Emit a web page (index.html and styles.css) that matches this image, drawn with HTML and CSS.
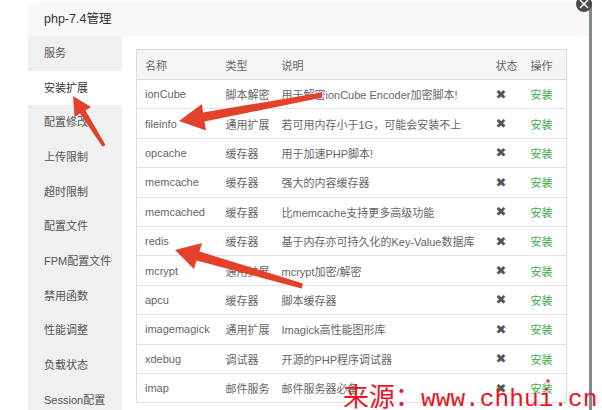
FILE: index.html
```html
<!DOCTYPE html>
<html lang="zh-CN">
<head>
    <meta charset="UTF-8">
    <title>php-7.4管理</title>
    <link rel="stylesheet" href="styles.css">
</head>
<body>
    <div class="dialog">
        <div class="title">php-7.4管理</div>
        <div class="layer-body">
            <ul class="side">
                <li>服务</li>
                <li class="active">安装扩展</li>
                <li>配置修改</li>
                <li>上传限制</li>
                <li>超时限制</li>
                <li>配置文件</li>
                <li>FPM配置文件</li>
                <li>禁用函数</li>
                <li>性能调整</li>
                <li>负载状态</li>
                <li>Session配置</li>
            </ul>
            <div class="main">
                <table class="ext-table">
                    <colgroup>
                        <col class="c-name"><col class="c-type"><col><col class="c-state"><col class="c-op">
                    </colgroup>
                    <thead>
                        <tr><th>名称</th><th>类型</th><th>说明</th><th>状态</th><th>操作</th></tr>
                    </thead>
                    <tbody>
                        <tr><td>ionCube</td><td>脚本解密</td><td>用于解密ionCube Encoder加密脚本!</td><td class="x">✖</td><td class="op">安装</td></tr>
                        <tr><td>fileinfo</td><td>通用扩展</td><td>若可用内存小于1G，可能会安装不上</td><td class="x">✖</td><td class="op">安装</td></tr>
                        <tr><td>opcache</td><td>缓存器</td><td>用于加速PHP脚本!</td><td class="x">✖</td><td class="op">安装</td></tr>
                        <tr><td>memcache</td><td>缓存器</td><td>强大的内容缓存器</td><td class="x">✖</td><td class="op">安装</td></tr>
                        <tr><td>memcached</td><td>缓存器</td><td>比memcache支持更多高级功能</td><td class="x">✖</td><td class="op">安装</td></tr>
                        <tr><td>redis</td><td>缓存器</td><td>基于内存亦可持久化的Key-Value数据库</td><td class="x">✖</td><td class="op">安装</td></tr>
                        <tr><td>mcrypt</td><td>通用扩展</td><td>mcrypt加密/解密</td><td class="x">✖</td><td class="op">安装</td></tr>
                        <tr><td>apcu</td><td>缓存器</td><td>脚本缓存器</td><td class="x">✖</td><td class="op">安装</td></tr>
                        <tr><td>imagemagick</td><td>通用扩展</td><td>Imagick高性能图形库</td><td class="x">✖</td><td class="op">安装</td></tr>
                        <tr><td>xdebug</td><td>调试器</td><td>开源的PHP程序调试器</td><td class="x">✖</td><td class="op">安装</td></tr>
                        <tr><td>imap</td><td>邮件服务</td><td>邮件服务器必备</td><td class="x">✖</td><td class="op">安装</td></tr>
                    </tbody>
                </table>
            </div>
        </div>
        <svg class="close-btn" width="18" height="16" viewBox="0 0 18 16">
            <circle cx="9" cy="4" r="8" fill="#4a4a4a"/>
            <path d="M5 0 L13 8 M13 0 L5 8" stroke="#fff" stroke-width="1.5"/>
        </svg>
    </div>

    <!-- red annotation arrows -->
    <svg class="marks" width="602" height="410" viewBox="0 0 602 410">
        <polygon fill="#e4412b" points="73,96 91,107 85.5,110.5 105.5,145 102.5,146.8 80,113.5 74.5,117"/>
        <polygon fill="#e4412b" points="179,121 202,104 203,112.5 321.5,92.5 322.5,97.5 204.5,121.5 206,130.5"/>
        <polygon fill="#e4412b" points="175,250 202,243 199.5,251.5 303,283.5 301.5,288.5 196.5,260.5 194,269"/>
        <circle cx="548" cy="381" r="1.8" fill="#e4412b"/>
    </svg>
    <div class="watermark"><span class="wm-cjk">来源：</span>www.chhui.cn</div>
</body>
</html>
```

FILE: styles.css
```css
body {
    margin: 0;
    padding-top: 2px;
    height: 408px;
    overflow: hidden;
    background: #fff;
    font-family: "Liberation Sans", "Noto Sans CJK SC", sans-serif;
    font-size: 11px;
    color: #555;
    position: relative;
}
.dialog {
    position: relative;
    margin-left: 28px;
    width: 561px;
    height: 420px;
    border-right: 3px solid #848b84;
    border-radius: 6px 0 0 0;
    background: #fff;
}
.title {
    height: 34px;
    line-height: 34px;
    padding-left: 16px;
    background: #f8f8f8;
    border-radius: 6px 0 0 0;
    font-size: 12.5px;
    color: #333;
}
.layer-body {
    display: flex;
}
.side {
    list-style: none;
    margin: 0;
    padding: 0;
    width: 94px;
    background: #f0f0f0;
}
.side li {
    height: 34.67px;
    line-height: 34.67px;
    padding-left: 16px;
    color: #555;
}
.side li.active {
    background: #fff;
    color: #333;
}
.main {
    flex: 1;
    padding: 13px 22px 0 14px;
}
.ext-table {
    width: 100%;
    table-layout: fixed;
    border-collapse: collapse;
    border: 1px solid #ddd;
}
.c-name { width: 81px; }
.c-type { width: 56px; }
.c-state { width: 35px; }
.c-op { width: 44px; }
.ext-table th {
    height: 29px;
    background: #f5f5f5;
    font-weight: normal;
    text-align: left;
    padding: 0 0 0 8px;
    color: #666;
    border-bottom: 1px solid #ddd;
}
.ext-table td {
    height: 28.4px;
    padding: 0 0 0 8px;
    border-bottom: 1px solid #e3e3e3;
    color: #666;
    white-space: nowrap;
    overflow: hidden;
}
.ext-table td.x {
    padding-left: 8px;
    color: #555;
    font-family: "DejaVu Sans", sans-serif;
    font-size: 13px;
}
.ext-table td.op {
    color: #3aa845;
}
.close-btn {
    position: absolute;
    right: -4px;
    top: -2px;
}
.marks {
    position: absolute;
    left: 0;
    top: 0;
    pointer-events: none;
}
.watermark {
    position: absolute;
    left: 343px;
    top: 379px;
    color: #e8141e;
    font-family: "Liberation Mono", monospace;
    font-size: 24.5px;
    line-height: 32px;
    white-space: nowrap;
}
.wm-cjk {
    font-family: "Noto Sans CJK SC", serif;
    font-size: 26px;
}
```
